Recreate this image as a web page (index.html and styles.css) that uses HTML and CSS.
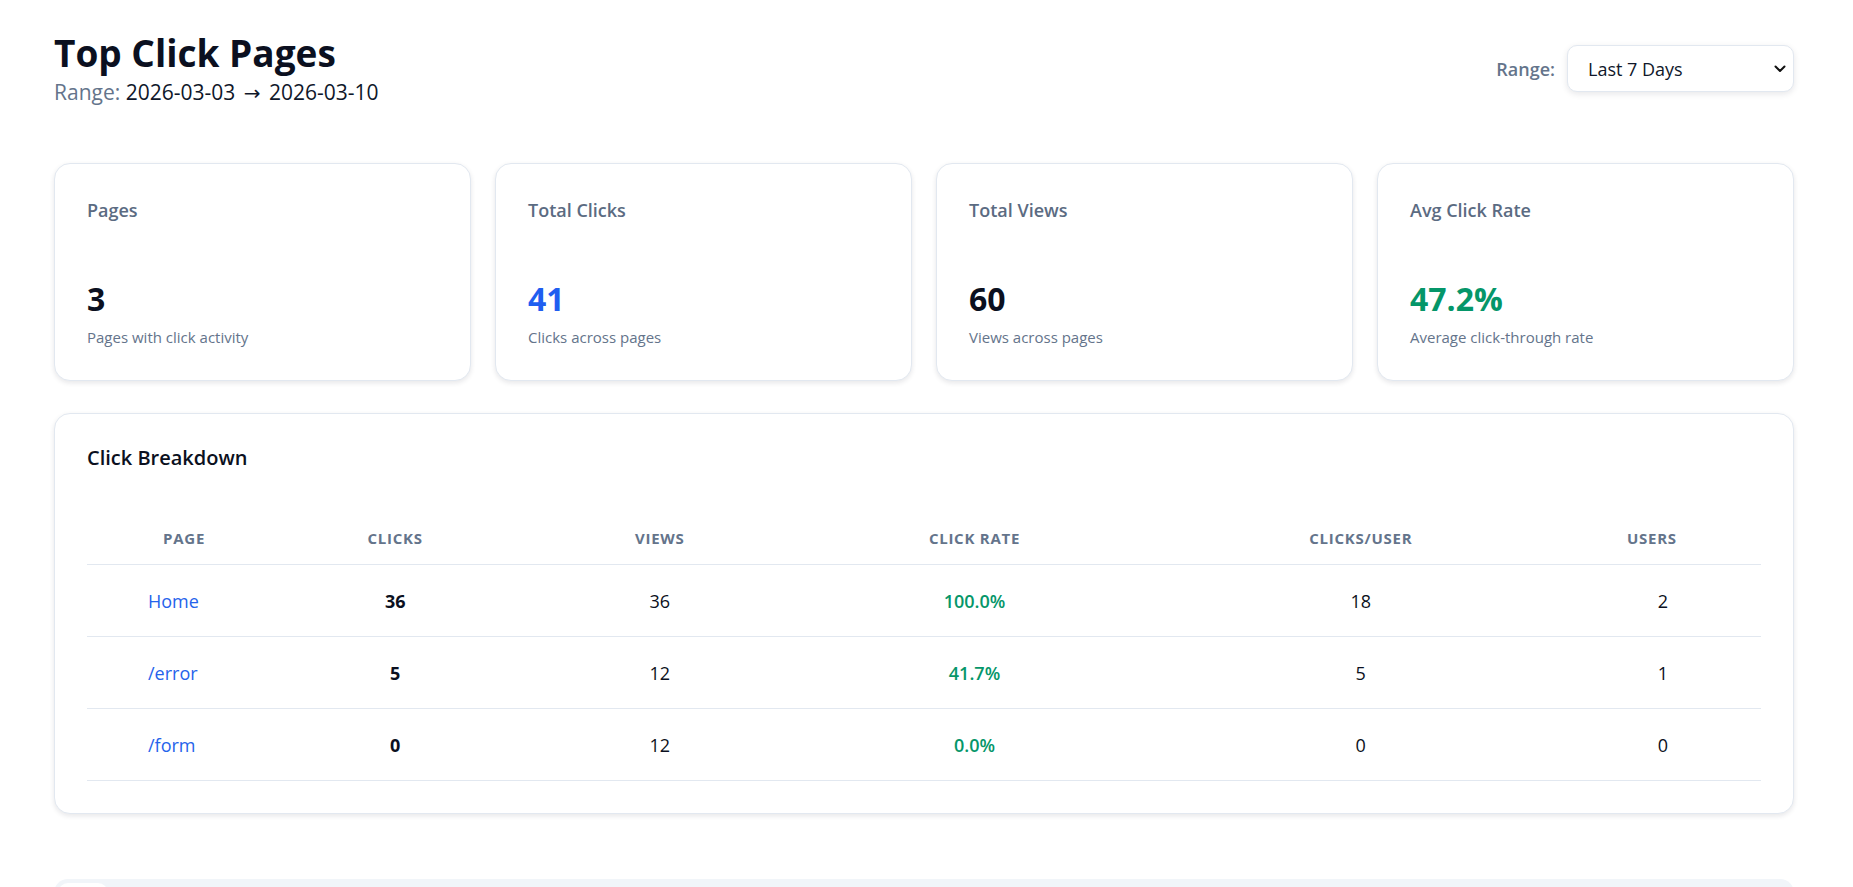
FILE: index.html
```html
<!DOCTYPE html>
<html lang="en">
<head>
  <meta charset="UTF-8" />
  <meta name="viewport" content="width=device-width, initial-scale=1.0" />
  <title>Top Click Pages</title>
  <link rel="stylesheet" href="styles.css">
</head>
<body>

<div class="page">
  <header class="page-header">
    <div>
      <h1>Top Click Pages</h1>
      <p class="range-text"><span class="muted">Range:</span> 2026-03-03 <span class="arrow">→</span> 2026-03-10</p>
    </div>
    <div class="range-picker">
      <label for="rangeSelect">Range:</label>
      <div class="select-wrap">
        <select id="rangeSelect">
          <option>Last 7 Days</option>
          <option>Last 30 Days</option>
          <option>Last 90 Days</option>
        </select>
        <svg class="chevron" width="12" height="8" viewBox="0 0 12 8"><path d="M1.5 1.5 6 6l4.5-4.5" fill="none" stroke="#111" stroke-width="2" stroke-linecap="round" stroke-linejoin="round"/></svg>
      </div>
    </div>
  </header>

  <section class="stats">
    <div class="stat-card">
      <div class="stat-label">Pages</div>
      <div class="stat-value">3</div>
      <div class="stat-sub">Pages with click activity</div>
    </div>
    <div class="stat-card">
      <div class="stat-label">Total Clicks</div>
      <div class="stat-value blue">41</div>
      <div class="stat-sub">Clicks across pages</div>
    </div>
    <div class="stat-card">
      <div class="stat-label">Total Views</div>
      <div class="stat-value">60</div>
      <div class="stat-sub">Views across pages</div>
    </div>
    <div class="stat-card">
      <div class="stat-label">Avg Click Rate</div>
      <div class="stat-value green">47.2%</div>
      <div class="stat-sub">Average click-through rate</div>
    </div>
  </section>

  <section class="card breakdown">
    <h2>Click Breakdown</h2>
    <table>
      <colgroup>
        <col style="width:176px">
        <col style="width:264px">
        <col style="width:265px">
        <col style="width:364px">
        <col style="width:408px">
        <col style="width:196px">
      </colgroup>
      <thead>
        <tr>
          <th>Page</th>
          <th>Clicks</th>
          <th>Views</th>
          <th>Click Rate</th>
          <th>Clicks/User</th>
          <th>Users</th>
        </tr>
      </thead>
      <tbody>
        <tr>
          <td><a href="#">Home</a></td>
          <td class="strong">36</td>
          <td>36</td>
          <td class="rate">100.0%</td>
          <td>18</td>
          <td>2</td>
        </tr>
        <tr>
          <td><a href="#">/error</a></td>
          <td class="strong">5</td>
          <td>12</td>
          <td class="rate">41.7%</td>
          <td>5</td>
          <td>1</td>
        </tr>
        <tr>
          <td><a href="#">/form</a></td>
          <td class="strong">0</td>
          <td>12</td>
          <td class="rate">0.0%</td>
          <td>0</td>
          <td>0</td>
        </tr>
      </tbody>
    </table>
  </section>

  <section class="tabs">
    <div class="tab active">&nbsp;</div>
  </section>
</div>

</body>
</html>
```

FILE: styles.css
```css
* {
  box-sizing: border-box;
}

body {
  margin: 0;
  background: #fff;
  color: #0f172a;
  font-family: "Open Sans", "Noto Sans", sans-serif;
}

.page {
  width: 1740px;
  margin-left: 54px;
  padding-top: 30px;
  padding-bottom: 40px;
}

.page-header {
  display: flex;
  justify-content: space-between;
  align-items: center;
  margin-bottom: 56px;
}

h1 {
  margin: 0 0 3px;
  font-size: 37px;
  line-height: 45px;
  font-weight: 700;
  color: #0b1020;
}

.range-text {
  margin: 0;
  font-size: 21px;
  line-height: 1.4;
}

.arrow {
  font-family: "DejaVu Sans", sans-serif;
  font-size: 20px;
  margin: 0 3px;
}

.muted {
  color: #64748b;
}

.range-picker {
  display: flex;
  align-items: center;
  gap: 12px;
}

.range-picker label {
  font-size: 18px;
  font-weight: 600;
  color: #64748b;
}

.select-wrap {
  position: relative;
}

.select-wrap select {
  appearance: none;
  -webkit-appearance: none;
  width: 227px;
  height: 47px;
  padding: 0 36px 0 20px;
  border: 1px solid #e2e8f0;
  border-radius: 10px;
  background: #fff;
  box-shadow: 0 2px 6px rgba(15, 23, 42, 0.1);
  font-family: inherit;
  font-size: 18px;
  color: #0f172a;
}

.chevron {
  position: absolute;
  right: 8px;
  top: 20px;
  pointer-events: none;
}

.stats {
  display: grid;
  grid-template-columns: repeat(4, 1fr);
  gap: 24px;
  margin-bottom: 32px;
}

.stat-card,
.card {
  background: #fff;
  border: 1px solid #e2e8f0;
  border-radius: 16px;
  box-shadow: 0 2px 5px rgba(15, 23, 42, 0.1);
}

.stat-card {
  display: flex;
  flex-direction: column;
  min-height: 218px;
  padding: 34px 32px 32px;
}

.stat-label {
  font-size: 18px;
  line-height: 24px;
  font-weight: 600;
  color: #5b6b82;
}

.stat-value {
  margin-top: auto;
  font-size: 32px;
  line-height: 38px;
  font-weight: 700;
  color: #0b1020;
}

.stat-value.blue {
  color: #1f5ef0;
}

.stat-value.green {
  color: #059669;
}

.stat-sub {
  margin-top: 8px;
  font-size: 15px;
  line-height: 22px;
  color: #64748b;
}

.breakdown {
  padding: 32px;
}

.breakdown h2 {
  margin: 0 0 42px;
  font-size: 20px;
  line-height: 24px;
  font-weight: 600;
  color: #0b1020;
}

table {
  width: 100%;
  border-collapse: collapse;
  table-layout: fixed;
}

th {
  padding: 16px 0;
  font-size: 15px;
  line-height: 20px;
  font-weight: 700;
  letter-spacing: 0.05em;
  text-transform: uppercase;
  text-align: center;
  color: #64748b;
  border-bottom: 1px solid #e2e8f0;
}

th:first-child {
  padding-left: 18px;
}

th:last-child {
  padding-right: 22px;
}

td {
  padding: 23px 0 21px;
  font-size: 18px;
  line-height: 27px;
  text-align: center;
  color: #0b1020;
  border-bottom: 1px solid #e2e8f0;
}

td:first-child {
  text-align: left;
  padding-left: 61px;
}

td a {
  color: #2563eb;
  text-decoration: none;
}

td.strong {
  font-weight: 700;
}

td.rate {
  font-weight: 600;
  color: #059669;
}

.tabs {
  margin-top: 65px;
  height: 60px;
  padding: 4px;
  background: #f1f5f9;
  border-radius: 14px;
}

.tab {
  width: 50px;
  height: 40px;
  background: #fff;
  border-radius: 10px;
}
```
